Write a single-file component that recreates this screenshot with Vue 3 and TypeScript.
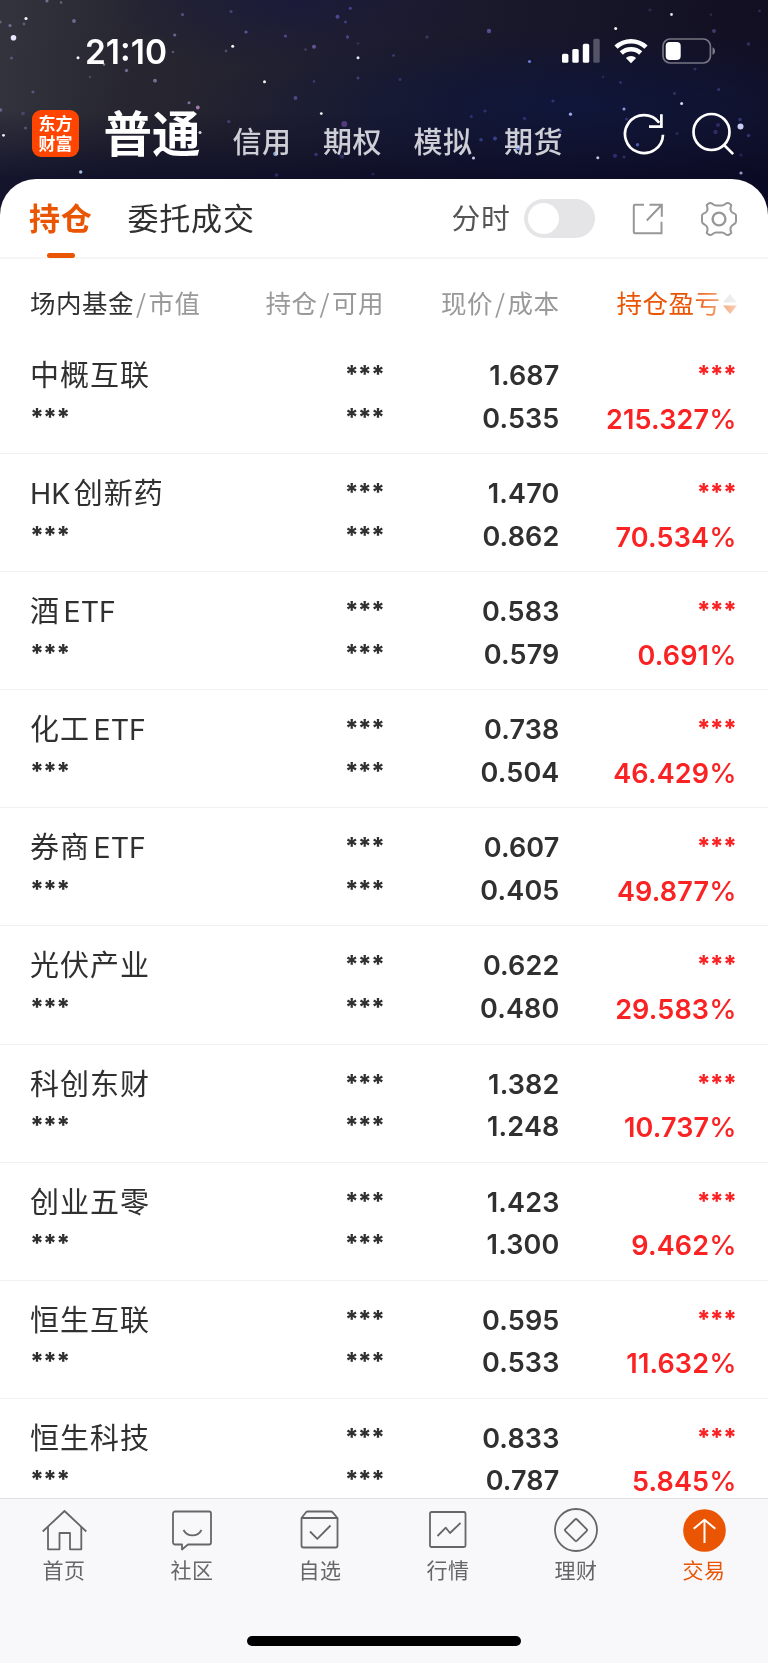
<script setup lang="ts">
interface Holding {
  name: string
  price: string
  cost: string
  profit: string
}

interface TabItem {
  label: string
  icon: 'home' | 'chat' | 'pick' | 'chart' | 'wealth' | 'trade'
  active?: boolean
}

const MASK = '***'

const holdings: Holding[] = [
  { name: '中概互联', price: '1.687', cost: '0.535', profit: '215.327' },
  { name: 'HK创新药', price: '1.470', cost: '0.862', profit: '70.534' },
  { name: '酒ETF', price: '0.583', cost: '0.579', profit: '0.691' },
  { name: '化工ETF', price: '0.738', cost: '0.504', profit: '46.429' },
  { name: '券商ETF', price: '0.607', cost: '0.405', profit: '49.877' },
  { name: '光伏产业', price: '0.622', cost: '0.480', profit: '29.583' },
  { name: '科创东财', price: '1.382', cost: '1.248', profit: '10.737' },
  { name: '创业五零', price: '1.423', cost: '1.300', profit: '9.462' },
  { name: '恒生互联', price: '0.595', cost: '0.533', profit: '11.632' },
  { name: '恒生科技', price: '0.833', cost: '0.787', profit: '5.845' },
]

// Latin and Chinese runs are separated so a small gap can sit between them.
const splitName = (name: string): string[] => name.match(/[A-Z]+|[^A-Z]+/g) ?? [name]
const isLatin = (part: string): boolean => /^[A-Z]/.test(part)

const accounts = ['信用', '期权', '模拟', '期货']

const tabs: TabItem[] = [
  { label: '首页', icon: 'home' },
  { label: '社区', icon: 'chat' },
  { label: '自选', icon: 'pick' },
  { label: '行情', icon: 'chart' },
  { label: '理财', icon: 'wealth' },
  { label: '交易', icon: 'trade', active: true },
]

// x, y, radius, colour, opacity
type Star = [number, number, number, string, number]
const stars: Star[] = [
  [13.5, 37.7, 2.8, '#e6e8ff', 1], [26, 18.5, 1.6, '#fff', 0.95], [10, 25.5, 1.6, '#8f88b5', 0.7],
  [24, 24, 1.4, '#8f88b5', 0.5], [0, 22, 1.6, '#8f88b5', 0.6], [47, 1, 1.6, '#a49bc4', 0.6],
  [61, 2.5, 1.2, '#a49bc4', 0.5], [74, 21, 1.9, '#8b86b8', 0.7], [78, 57.7, 1.5, '#fff', 0.95],
  [11.5, 58, 1.6, '#6c6690', 0.7], [33, 92, 1.6, '#6c6690', 0.7], [90, 77, 1.3, '#6c6690', 0.5],
  [126.5, 70.5, 1.7, '#7f76a8', 0.8], [155, 80.7, 1.9, '#8a7fb8', 0.8], [104, 64.5, 1.3, '#9c98bd', 0.7],
  [182.5, 14.5, 1.6, '#635b8e', 0.8], [174.7, 35, 1.6, '#7f76a8', 0.8], [173, 52, 1.3, '#7a7592', 0.6],
  [232.7, 46.3, 1.5, '#fff', 0.95], [226, 51, 1.4, '#6c6690', 0.6], [246, 32, 1.6, '#6259a8', 0.9],
  [231, 11.5, 1.6, '#5c5288', 0.7], [285.5, 36, 1.6, '#5e549a', 0.8], [264.5, 81.7, 1.5, '#fff', 0.95],
  [295.5, 98, 1.9, '#5a52a5', 0.8], [314, 46.7, 2, '#7664aa', 0.8], [305.5, 49.5, 1.2, '#5f5590', 0.6],
  [314, 81.5, 1.4, '#5a52a5', 0.5], [337.5, 16.7, 2, '#5b52a8', 0.8], [350.3, 8.3, 1.6, '#5147a0', 0.8],
  [345.5, 22, 1.5, '#564c98', 0.7], [347.5, 37, 1.7, '#5d53a5', 0.7], [358, 57.7, 1.5, '#eef0ff', 0.95],
  [358, 78, 1.5, '#564c98', 0.7], [358, 43.5, 1.2, '#564c98', 0.5], [321.3, 113.6, 1.4, '#fff', 0.95],
  [344.3, 124, 3, '#694596', 0.75], [228.8, 121.6, 1.7, '#514386', 0.8], [189, 102.7, 1.5, '#8b83bd', 0.8],
  [197.8, 107.5, 1.9, '#c48ed0', 0.8], [200, 132.5, 1.5, '#fff', 0.85], [0.5, 110, 1.8, '#7b719e', 0.8],
  [23, 113.5, 1.8, '#534b84', 0.8], [25.5, 128, 1.5, '#6c6690', 0.7], [3.5, 135.3, 1.4, '#fff', 0.95],
  [80.7, 172, 1.7, '#a5c8e6', 0.95], [275.5, 153.8, 2.4, '#8fb0e6', 0.9], [316, 154.5, 1.8, '#3c3c82', 0.8],
  [276.5, 175, 1.8, '#2f3474', 0.8], [342, 156.5, 2.2, '#33316e', 0.8], [373, 174, 1.6, '#33316e', 0.6],
  [489, 31, 2.2, '#5e519e', 0.9], [427, 37, 1.6, '#4b427e', 0.7], [393.5, 55.5, 1.3, '#4a50a0', 0.7],
  [400, 79.5, 1.5, '#33418c', 0.7], [529.5, 61.5, 1.6, '#6c7edb', 0.95], [615.7, 28.5, 1.5, '#fff', 0.95],
  [671.5, 14.5, 1.4, '#eef', 0.95], [650, 10, 1.8, '#393158', 0.6], [711, 14.7, 1.3, '#3b355e', 0.7],
  [714, 31, 2, '#51407c', 0.8], [748.5, 44, 1.8, '#40346c', 0.8], [759.5, 11, 1.4, '#463b70', 0.6],
  [695, 69, 1.6, '#3a3270', 0.8], [620.5, 82.5, 1.4, '#3b387e', 0.8], [603, 77, 1.4, '#302d68', 0.7],
  [674.5, 93.5, 1.4, '#4a4374', 0.7], [718.7, 89.5, 1.6, '#4a3f8a', 0.7], [681.6, 103.4, 1.5, '#dde4ff', 0.95],
  [624, 109, 1.5, '#8da4ec', 0.95], [553, 101, 1.6, '#363b84', 0.8], [485, 111, 1.5, '#323886', 0.8],
  [471.3, 116.5, 1.5, '#373f92', 0.7], [524.5, 118.5, 1.7, '#353d90', 0.7], [570.5, 114.2, 1.6, '#a4b4f4', 0.95],
  [626.5, 119, 1.5, '#3a3d82', 0.8], [740.5, 126.5, 3, '#d0d8ff', 0.95], [740, 119.5, 1.8, '#3a3c86', 0.8],
  [748.5, 135.5, 1.8, '#41377e', 0.8], [718, 125, 2, '#43347c', 0.7], [715.5, 132, 2.2, '#43347c', 0.7],
  [677, 133.5, 1.6, '#303072', 0.7], [637.5, 144.7, 1.7, '#5262bc', 0.9], [481, 139.7, 1.8, '#3b4490', 0.8],
  [495, 138.5, 2, '#424aa2', 0.8], [518, 147.5, 2.6, '#6e92e6', 0.9], [473.5, 158, 1.5, '#dfe4ff', 0.9],
  [597.8, 157.8, 1.5, '#cdd6ff', 0.9], [615, 155.8, 2.1, '#352f78', 0.9], [624, 157, 1.5, '#39357c', 0.8],
  [741, 173, 1.6, '#aab4f0', 0.85], [741, 155, 1.8, '#2e2b66', 0.7], [560.5, 131, 1.5, '#4049a0', 0.8],
]
</script>

<template>
  <div class="screen">
    <header class="sky">
      <svg class="stars" viewBox="0 0 768 240" width="768" height="240" aria-hidden="true">
        <defs>
          <filter id="soft" x="-50%" y="-50%" width="200%" height="200%">
            <feGaussianBlur stdDeviation="0.6" />
          </filter>
        </defs>
        <g filter="url(#soft)">
          <circle
            v-for="([x, y, r, fill, o], i) in stars"
            :key="i"
            :cx="x"
            :cy="y"
            :r="r"
            :fill="fill"
            :opacity="o"
          />
        </g>
      </svg>

      <div class="status">
        <span class="clock">21:10</span>
        <div class="signals">
          <svg width="40" height="26" viewBox="0 0 40 26">
            <rect x="1" y="15.8" width="6.4" height="9" rx="1.6" fill="#fff" />
            <rect x="11.3" y="11" width="6.4" height="13.8" rx="1.6" fill="#fff" />
            <rect x="21.8" y="5.8" width="6.4" height="19" rx="1.6" fill="#fff" />
            <rect x="32.3" y="0.8" width="6.4" height="24" rx="1.6" fill="#fff" opacity=".27" />
          </svg>
          <svg class="wifi" width="34" height="26" viewBox="0 0 34 26">
            <g fill="none" stroke="#fff" stroke-width="4.6">
              <path d="M2 9.2a21.8 21.8 0 0 1 30 0" />
              <path d="M7.3 15a14.3 14.3 0 0 1 19.4 0" />
            </g>
            <path fill="#fff" d="M17 25.2l-5.1-5.1a7.4 7.4 0 0 1 10.2 0z" />
          </svg>
          <svg class="battery" width="54" height="26" viewBox="0 0 54 26">
            <rect x="1" y="1" width="47.4" height="24" rx="7" fill="none" stroke="#fff" stroke-width="1.7" opacity=".42" />
            <rect x="3.7" y="4" width="15" height="18" rx="4" fill="#fff" />
            <path d="M50.5 9.2c3.4 1.3 3.4 6.3 0 7.6z" fill="#fff" opacity=".45" />
          </svg>
        </div>
      </div>

      <div class="titlebar">
        <div class="logo"><span>东方</span><span>财富</span></div>
        <h1>普通</h1>
        <nav class="accounts">
          <span v-for="a in accounts" :key="a">{{ a }}</span>
        </nav>
        <svg class="refresh" width="44" height="44" viewBox="0 0 44 44">
          <g fill="none" stroke="#fff" stroke-width="2.7">
            <path d="M41 22.7A19 19 0 1 1 37.2 10.7" />
            <path d="M39.4 2.3v12.4H27" />
          </g>
        </svg>
        <svg class="search" width="44" height="44" viewBox="0 0 44 44">
          <g fill="none" stroke="#fff" stroke-width="2.7">
            <circle cx="20.5" cy="20" r="18" />
            <path d="M32.8 32.7l9.4 9.4" />
          </g>
        </svg>
      </div>
    </header>

    <main class="sheet">
      <div class="toolbar">
        <span class="tab active">持仓</span>
        <span class="tab">委托成交</span>
        <span class="minute">分时</span>
        <span class="switch"></span>
        <svg class="share" width="32" height="32" viewBox="0 0 32 32">
          <g fill="none" stroke="#979797" stroke-width="2">
            <path d="M12 1.8H3a1.2 1.2 0 0 0-1.2 1.2v26A1.2 1.2 0 0 0 3 30.2h26.5V18.8" />
            <path d="M17.5 1.8h12.3v12M29.8 1.8L14.8 17.5" />
          </g>
        </svg>
        <svg class="gear" width="38" height="38" viewBox="-19 -19 38 38">
          <g fill="none" stroke="#979797" stroke-width="2" stroke-linejoin="round">
            <path d="M-10-15.8C-6.5-17-6.5-13.5-3-13.5H3C6.5-13.5 6.5-17 10-15.8L12.3-14C11-10.5 11-9.5 12-8C13.2-5 17-6 17-3.5V2.5C17 5.5 13.2 5 12 8C11 9.5 11 10.5 12.3 14L10 15.8C6.5 17 6.5 13.5 3 13.5H-3C-6.5 13.5-6.5 17-10 15.8L-12.3 14C-11 10.5-11 9.5-12 8C-13.2 5-17 5.5-17 2.5V-3.5C-17-6-13.2-5-12-8C-11-9.5-11-10.5-12.3-14Z" />
            <circle r="6.4" stroke-width="2.4" />
          </g>
        </svg>
      </div>

      <div class="grid columns">
        <span><b>场内基金</b><i>/</i>市值</span>
        <span>持仓<i>/</i>可用</span>
        <span>现价<i>/</i>成本</span>
        <span class="sorted">
          持仓盈亏
          <svg width="16" height="24" viewBox="0 0 16 24">
            <path d="M1 10.5L8 2l7 8.5z" fill="#cfcfd3" />
            <path d="M1 13.5L8 22l7-8.5z" fill="#ea5504" />
          </svg>
        </span>
      </div>

      <section class="list">
        <article v-for="h in holdings" :key="h.name" class="row">
          <div class="grid line">
            <span class="name">
              <span v-for="part in splitName(h.name)" :key="part" :class="{ latin: isLatin(part) }">{{ part }}</span>
            </span>
            <span class="mask">{{ MASK }}</span>
            <span class="num">{{ h.price }}</span>
            <span class="mask up">{{ MASK }}</span>
          </div>
          <div class="grid line">
            <span class="mask">{{ MASK }}</span>
            <span class="mask">{{ MASK }}</span>
            <span class="num">{{ h.cost }}</span>
            <span class="num up">{{ h.profit }}<small>%</small></span>
          </div>
        </article>
      </section>
    </main>

    <footer class="dock">
      <nav>
        <a v-for="t in tabs" :key="t.icon" :class="{ active: t.active }">
          <svg width="46" height="46" viewBox="0 0 46 46">
            <g fill="none" stroke="#666" stroke-width="1.8" stroke-linejoin="round">
              <template v-if="t.icon === 'home'">
                <path d="M1.7 23.5L23.5 3l21.8 20.5" />
                <path d="M7 19v22.3H18.5V25H29v16.3H40.3V19" />
              </template>
              <template v-else-if="t.icon === 'chat'">
                <path d="M6 3.5h34a2 2 0 0 1 2 2v29a2 2 0 0 1-2 2H19l-6 5v-5H6a2 2 0 0 1-2-2V5.5a2 2 0 0 1 2-2z" />
                <path d="M14.5 22c4 7.3 14 7.3 18 0" />
              </template>
              <template v-else-if="t.icon === 'pick'">
                <path d="M4.5 10v27.5a2 2 0 0 0 2 2H38.5a2 2 0 0 0 2-2V10zM4.5 10L9 4.3q.6-.8 1.6-.8H34q1 0 1.6.8L40.5 10" />
                <path d="M13 23.5l7.3 7.3L33.5 17.5" />
              </template>
              <template v-else-if="t.icon === 'chart'">
                <rect x="5" y="4" width="35.5" height="35" rx="1.5" />
                <path d="M12.5 28l8.3-8.3 4.2 5.3 10.5-10" />
              </template>
              <template v-else-if="t.icon === 'wealth'">
                <circle cx="23" cy="22" r="21" />
                <path d="M22 11.5q1-1 2 0l9.6 9.6q1 1 0 2L24 32.7q-1 1-2 0l-9.6-9.6q-1-1 0-2z" />
              </template>
              <template v-else>
                <circle cx="23.5" cy="22.5" r="21.3" fill="#ea5504" stroke="none" />
                <path d="M23.5 35V12M12.7 20.8l10.8-9 10.8 9" stroke="#fff" stroke-width="2" />
              </template>
            </g>
          </svg>
          <span>{{ t.label }}</span>
        </a>
      </nav>
      <div class="home-bar"></div>
    </footer>
  </div>
</template>

<style>
body {
  margin: 0;
}
</style>

<style scoped>
.screen {
  width: 768px;
  height: 1663px;
  display: flex;
  flex-direction: column;
  overflow: hidden;
  background: #fff;
  font-family: Inter, 'Noto Sans CJK SC', sans-serif;
  color: #303030;
}

.sky {
  position: relative;
  height: 179px;
  flex: none;
  color: #fff;
}
.sky::before {
  content: '';
  position: absolute;
  inset: 0 0 -61px;
  background:
    radial-gradient(ellipse 380px 75px at 570px 105px, rgba(13, 22, 62, 0.8), transparent),
    radial-gradient(ellipse 200px 70px at 290px 0, rgba(20, 22, 66, 0.55), transparent),
    linear-gradient(180deg, transparent 110px, rgba(8, 9, 38, 0.7) 178px),
    linear-gradient(97deg, #33343e 0, #272630 18%, #201f2e 42%, #19172a 65%, #110e22 100%);
}
.stars {
  position: absolute;
  left: 0;
  top: 0;
}
.status,
.titlebar {
  position: relative;
  display: flex;
}
.status {
  height: 102px;
  padding: 31px 52.5px 0 85px;
  box-sizing: border-box;
  justify-content: space-between;
}
.clock {
  font-size: 33.5px;
  line-height: 42px;
  font-weight: 600;
}
.signals {
  display: flex;
  padding-top: 7px;
}
.wifi {
  margin-left: 13px;
}
.battery {
  margin-left: 14px;
}
.titlebar {
  padding-left: 32px;
  height: 77px;
}
.logo {
  width: 47px;
  height: 47px;
  margin-top: 8px;
  border-radius: 9px;
  background: #ff4500;
  display: flex;
  flex-direction: column;
  align-items: center;
  justify-content: center;
  font-size: 17px;
  line-height: 20px;
  font-weight: 700;
}
h1 {
  margin: 0 0 0 24.5px;
  width: 129px;
  font-size: 48.5px;
  line-height: 66px;
  font-weight: 700;
}
.accounts {
  display: flex;
  padding-top: 20px;
  width: 389.5px;
  color: #cdced6;
  font-size: 29px;
  line-height: 42px;
  font-weight: 500;
}
.accounts span {
  width: 90.5px;
  letter-spacing: 0.4px;
}
.refresh {
  margin-top: 10px;
}
.search {
  margin: 10px 0 0 25px;
}

.sheet {
  position: relative;
  flex: 1;
  min-height: 0;
  display: flex;
  flex-direction: column;
  overflow: hidden;
  background: #fff;
  border-radius: 36px 36px 0 0;
}
.toolbar {
  flex: none;
  height: 80px;
  box-sizing: border-box;
  padding-left: 29px;
  border-bottom: 2px solid #f6f6f6;
  display: flex;
  line-height: 80px;
}
.tab {
  position: relative;
  width: 98.5px;
  font-size: 31px;
  letter-spacing: 0.8px;
}
.tab + .tab {
  width: 324px;
}
.tab.active {
  color: #ea5504;
  font-weight: 700;
}
.tab.active::after {
  content: '';
  position: absolute;
  left: 17.5px;
  bottom: -1px;
  width: 28px;
  height: 5.5px;
  border-radius: 2.5px;
  background: #ea5504;
}
.minute {
  width: 72.5px;
  font-size: 28.8px;
  letter-spacing: 0.6px;
  color: #555;
}
.switch {
  width: 71px;
  height: 39px;
  margin-top: 20px;
  box-sizing: border-box;
  padding: 4px;
  border-radius: 20px;
  background: #e5e5e7;
}
.switch::before {
  content: '';
  display: block;
  width: 31px;
  height: 31px;
  border-radius: 50%;
  background: #fff;
}
.share {
  margin: 24px 0 0 37px;
}
.gear {
  margin: 21px 0 0 35.5px;
}

.grid {
  display: grid;
  grid-template-columns: 200px 154px 175.5px 176.5px;
  padding: 0 32px 0 30px;
}
.grid > * + * {
  text-align: right;
}
.columns {
  flex: none;
  height: 77px;
  line-height: 90px;
  font-size: 25.5px;
  letter-spacing: 0.5px;
  color: #999;
}
.columns b {
  font-weight: 400;
  color: #303030;
}
.columns i {
  font-style: normal;
  font-family: 'Noto Sans CJK SC', sans-serif;
  line-height: 1;
  margin: 0 2px;
}
.columns .sorted {
  position: relative;
  display: flex;
  justify-content: flex-end;
  align-items: center;
  height: 90px;
  color: #ea5504;
}
.sorted svg {
  margin: 0 -1.5px 0 1px;
}
.sorted::after {
  content: '';
  position: absolute;
  right: -2px;
  top: 20px;
  bottom: 20px;
  width: 46px;
  background: linear-gradient(90deg, rgba(255, 255, 255, 0), rgba(255, 255, 255, 0.75));
}

.row {
  height: 118.1px;
  box-sizing: border-box;
  padding-top: 19px;
  border-bottom: 1px solid #f1f1f1;
}
.line {
  height: 42.6px;
  line-height: 42px;
}
.name {
  display: flex;
  gap: 3.5px;
  font-size: 29px;
  letter-spacing: 1px;
}
.latin {
  font-size: 28.5px;
  letter-spacing: 0;
}
.num {
  font-size: 27px;
  font-weight: 600;
  letter-spacing: 0.15px;
}
.num small {
  font-size: 27.5px;
  font-weight: 500;
  letter-spacing: -0.5px;
}
.mask {
  line-height: 39.5px;
  font-size: 24px;
  font-weight: 800;
  letter-spacing: -0.9px;
}
.up {
  color: #fa2223;
}

.dock {
  position: relative;
  flex: none;
  height: 165px;
  box-sizing: border-box;
  border-top: 1px solid #dfdfe2;
  background: #f8f8fb;
}
.dock nav {
  display: grid;
  grid-template-columns: repeat(6, 128px);
  height: 137px;
}
.dock a {
  display: flex;
  flex-direction: column;
  align-items: center;
  padding-top: 9px;
  color: #666;
  font-size: 21px;
  line-height: 30px;
  letter-spacing: 0.5px;
}
.dock a span {
  margin-top: 2px;
}
.dock a.active {
  color: #ea5504;
}
.home-bar {
  width: 274px;
  height: 10px;
  margin: 0 auto;
  border-radius: 5px;
  background: #000;
}
</style>
